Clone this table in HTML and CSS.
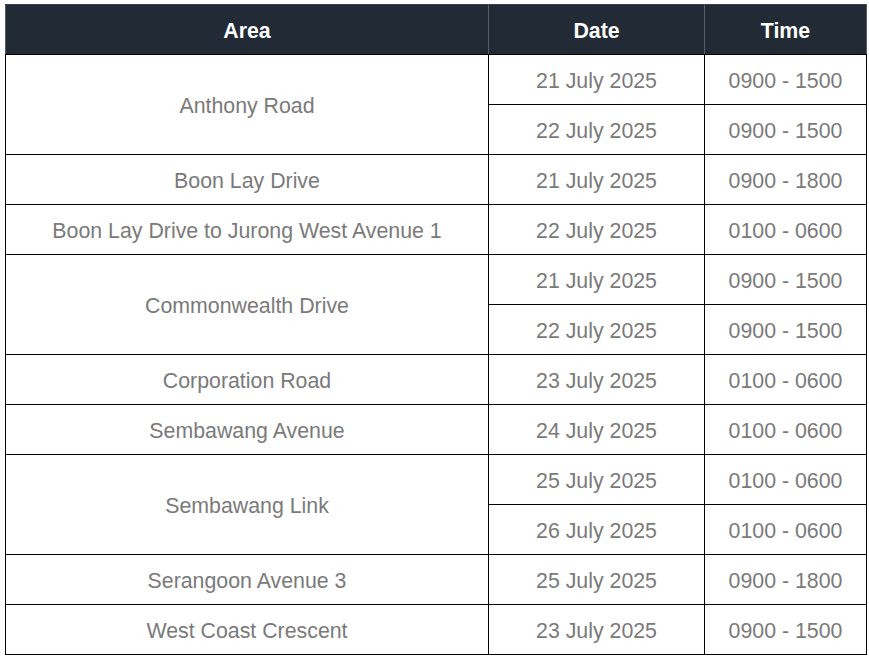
FILE: index.html
```html
<!DOCTYPE html>
<html>
<head>
<meta charset="utf-8">
<link rel="stylesheet" href="styles.css">
</head>
<body>
<table class="schedule">
  <colgroup>
    <col class="c-area">
    <col class="c-date">
    <col class="c-time">
  </colgroup>
  <thead>
    <tr><th>Area</th><th>Date</th><th>Time</th></tr>
  </thead>
  <tbody>
    <tr><td rowspan="2">Anthony Road</td><td>21 July 2025</td><td>0900 - 1500</td></tr>
    <tr><td>22 July 2025</td><td>0900 - 1500</td></tr>
    <tr><td>Boon Lay Drive</td><td>21 July 2025</td><td>0900 - 1800</td></tr>
    <tr><td>Boon Lay Drive to Jurong West Avenue 1</td><td>22 July 2025</td><td>0100 - 0600</td></tr>
    <tr><td rowspan="2">Commonwealth Drive</td><td>21 July 2025</td><td>0900 - 1500</td></tr>
    <tr><td>22 July 2025</td><td>0900 - 1500</td></tr>
    <tr><td>Corporation Road</td><td>23 July 2025</td><td>0100 - 0600</td></tr>
    <tr><td>Sembawang Avenue</td><td>24 July 2025</td><td>0100 - 0600</td></tr>
    <tr><td rowspan="2">Sembawang Link</td><td>25 July 2025</td><td>0100 - 0600</td></tr>
    <tr><td>26 July 2025</td><td>0100 - 0600</td></tr>
    <tr><td>Serangoon Avenue 3</td><td>25 July 2025</td><td>0900 - 1800</td></tr>
    <tr><td>West Coast Crescent</td><td>23 July 2025</td><td>0900 - 1500</td></tr>
  </tbody>
</table>
</body>
</html>
```
FILE: styles.css
```css
html, body {
  margin: 0;
  padding: 0;
  background: #ffffff;
}
body {
  padding: 4px 0 0 5px;
  font-family: "Liberation Sans", Arial, sans-serif;
}
.schedule {
  border-collapse: collapse;
  table-layout: fixed;
  width: 861px;
  font-size: 21.33px;
}
.c-area { width: 483px; }
.c-date { width: 216px; }
.c-time { width: 162px; }
.schedule th {
  background: #222a35;
  color: #ffffff;
  font-weight: bold;
  height: 45px;
  padding: 4px 0 0;
  text-align: center;
  vertical-align: middle;
  border: 1px solid #5a5f66;
  border-top-color: #3a3f46;
  border-bottom: 1px solid #000000;
}
.schedule td {
  color: #7a7a7a;
  height: 45px;
  padding: 4px 0 0;
  text-align: center;
  vertical-align: middle;
  border: 1px solid #000000;
}
```
